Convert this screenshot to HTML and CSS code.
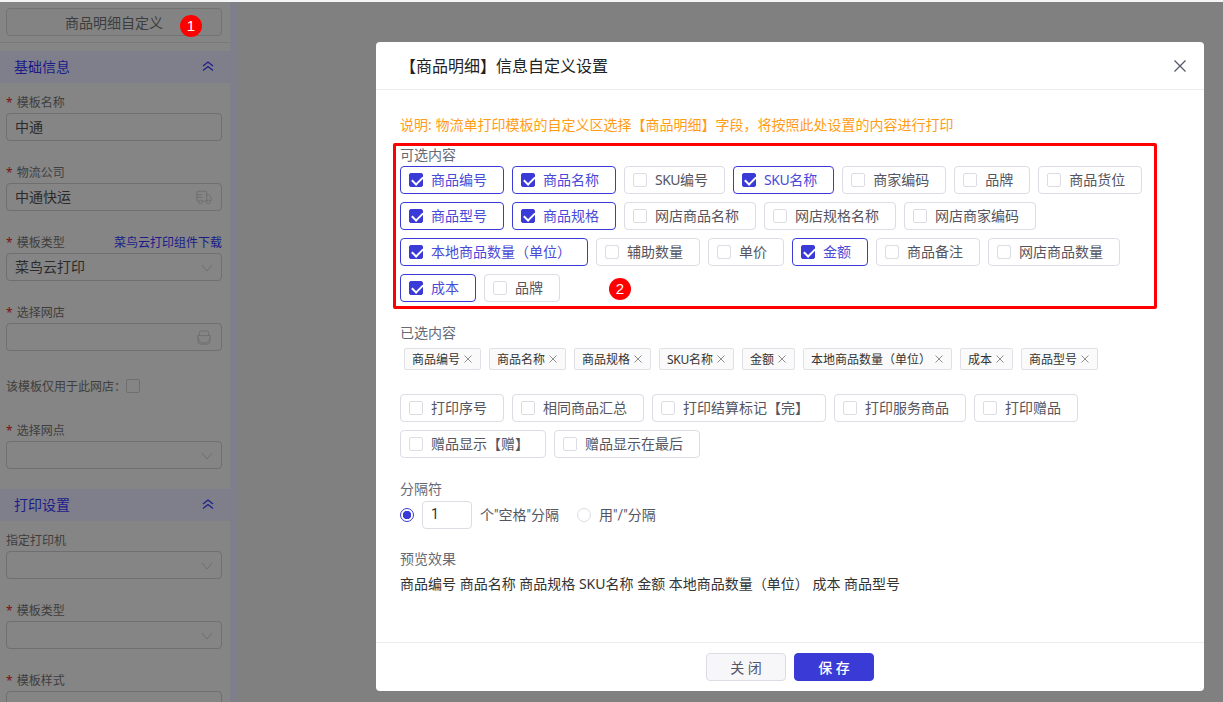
FILE: index.html
```html
<!DOCTYPE html>
<html lang="en">
<head>
  <meta charset="UTF-8">
  <title>商品明细自定义</title>
  <link rel="stylesheet" href="styles.css">
</head>
<body>
  <aside class="sidebar">
    <div class="top-action">
      <button class="btn-custom">商品明细自定义</button>
    </div>

    <div class="section-head">
      <span>基础信息</span>
      <svg class="double-up" viewBox="0 0 12 10"><path d="M1 5 6 1l5 4M1 9.500 6 5.500l5 4"/></svg>
    </div>
    <div class="field">
      <label><i>*</i>模板名称</label>
      <div class="input">中通</div>
    </div>
    <div class="field">
      <label><i>*</i>物流公司</label>
      <div class="input">中通快运
        <svg class="input-icon" viewBox="0 0 18 16"><path d="M12 12H7M3 12H2a1 1 0 0 1-1-1V2a1 1 0 0 1 1-1h9a1 1 0 0 1 1 1v10M12 5h3l2 3v4h-1M1 8h6M1 5h6"/><circle cx="5" cy="13" r="2"/><circle cx="14" cy="13" r="2"/></svg>
      </div>
    </div>
    <div class="field">
      <label class="label-row"><span><i>*</i>模板类型</span><a>菜鸟云打印组件下载</a></label>
      <div class="input">菜鸟云打印
        <svg class="chevron" viewBox="0 0 12 8"><path d="M1 1l5 6 5-6"/></svg>
      </div>
    </div>
    <div class="field">
      <label><i>*</i>选择网店</label>
      <div class="input">
        <svg class="input-icon" viewBox="0 0 16 16"><path d="M3 6V3a2 2 0 0 1 2-2h6a2 2 0 0 1 2 2v3M1 6h14M2 8v5a2 2 0 0 0 2 2h8a2 2 0 0 0 2-2V8M1 6v1a2 2 0 0 0 14 0V6"/></svg>
      </div>
    </div>
    <div class="only-shop">该模板仅用于此网店：<span class="box"></span></div>
    <div class="field">
      <label><i>*</i>选择网点</label>
      <div class="input"><svg class="chevron" viewBox="0 0 12 8"><path d="M1 1l5 6 5-6"/></svg></div>
    </div>

    <div class="section-head second">
      <span>打印设置</span>
      <svg class="double-up" viewBox="0 0 12 10"><path d="M1 5 6 1l5 4M1 9.500 6 5.500l5 4"/></svg>
    </div>
    <div class="field">
      <label>指定打印机</label>
      <div class="input"><svg class="chevron" viewBox="0 0 12 8"><path d="M1 1l5 6 5-6"/></svg></div>
    </div>
    <div class="field">
      <label><i>*</i>模板类型</label>
      <div class="input"><svg class="chevron" viewBox="0 0 12 8"><path d="M1 1l5 6 5-6"/></svg></div>
    </div>
    <div class="field">
      <label><i>*</i>模板样式</label>
      <div class="input"><svg class="chevron" viewBox="0 0 12 8"><path d="M1 1l5 6 5-6"/></svg></div>
    </div>
  </aside>

  <div class="badge badge-one">1</div>

  <div class="modal">
    <div class="modal-head">
      <h2>【商品明细】信息自定义设置</h2>
      <svg class="close" viewBox="0 0 12 12"><path d="M.5.500l11 11M11.500.500l-11 11"/></svg>
    </div>

    <div class="modal-body">
      <p class="notice">说明: 物流单打印模板的自定义区选择【商品明细】字段，将按照此处设置的内容进行打印</p>

      <div class="red-box">
        <div class="group-label">可选内容</div>
        <div class="chip-rows">
          <div class="chip-row">
            <div class="chip on"><span class="box"></span>商品编号</div>
            <div class="chip on"><span class="box"></span>商品名称</div>
            <div class="chip"><span class="box"></span><span><span class="sku">SKU</span>编号</span></div>
            <div class="chip on"><span class="box"></span><span><span class="sku">SKU</span>名称</span></div>
            <div class="chip"><span class="box"></span>商家编码</div>
            <div class="chip"><span class="box"></span>品牌</div>
            <div class="chip"><span class="box"></span>商品货位</div>
          </div>
          <div class="chip-row">
            <div class="chip on"><span class="box"></span>商品型号</div>
            <div class="chip on"><span class="box"></span>商品规格</div>
            <div class="chip"><span class="box"></span>网店商品名称</div>
            <div class="chip"><span class="box"></span>网店规格名称</div>
            <div class="chip"><span class="box"></span>网店商家编码</div>
          </div>
          <div class="chip-row">
            <div class="chip on"><span class="box"></span>本地商品数量（单位）</div>
            <div class="chip"><span class="box"></span>辅助数量</div>
            <div class="chip"><span class="box"></span>单价</div>
            <div class="chip on"><span class="box"></span>金额</div>
            <div class="chip"><span class="box"></span>商品备注</div>
            <div class="chip"><span class="box"></span>网店商品数量</div>
          </div>
          <div class="chip-row">
            <div class="chip on"><span class="box"></span>成本</div>
            <div class="chip"><span class="box"></span>品牌</div>
          </div>
        </div>
        <div class="badge badge-two">2</div>
      </div>

      <div class="group-label selected-label">已选内容</div>
      <div class="tags">
        <span class="tag">商品编号<svg viewBox="0 0 8 8"><path d="M.5.500l7 7M7.500.500l-7 7"/></svg></span>
        <span class="tag">商品名称<svg viewBox="0 0 8 8"><path d="M.5.500l7 7M7.500.500l-7 7"/></svg></span>
        <span class="tag">商品规格<svg viewBox="0 0 8 8"><path d="M.5.500l7 7M7.500.500l-7 7"/></svg></span>
        <span class="tag"><span><span class="sku">SKU</span>名称</span><svg viewBox="0 0 8 8"><path d="M.5.500l7 7M7.500.500l-7 7"/></svg></span>
        <span class="tag">金额<svg viewBox="0 0 8 8"><path d="M.5.500l7 7M7.500.500l-7 7"/></svg></span>
        <span class="tag">本地商品数量（单位）<svg viewBox="0 0 8 8"><path d="M.5.500l7 7M7.500.500l-7 7"/></svg></span>
        <span class="tag">成本<svg viewBox="0 0 8 8"><path d="M.5.500l7 7M7.500.500l-7 7"/></svg></span>
        <span class="tag">商品型号<svg viewBox="0 0 8 8"><path d="M.5.500l7 7M7.500.500l-7 7"/></svg></span>
      </div>

      <div class="chip-rows options">
        <div class="chip-row">
          <div class="chip"><span class="box"></span>打印序号</div>
          <div class="chip"><span class="box"></span>相同商品汇总</div>
          <div class="chip"><span class="box"></span>打印结算标记【完】</div>
          <div class="chip"><span class="box"></span>打印服务商品</div>
          <div class="chip"><span class="box"></span>打印赠品</div>
        </div>
        <div class="chip-row">
          <div class="chip"><span class="box"></span>赠品显示【赠】</div>
          <div class="chip"><span class="box"></span>赠品显示在最后</div>
        </div>
      </div>

      <div class="group-label sep-label">分隔符</div>
      <div class="sep-row">
        <span class="radio on"></span>
        <span class="num-input">1</span>
        <span class="sep-text">个"空格"分隔</span>
        <span class="radio second"></span>
        <span class="sep-text">用"/"分隔</span>
      </div>

      <div class="group-label preview-label">预览效果</div>
      <p class="preview">商品编号 商品名称 商品规格 SKU名称 金额 本地商品数量（单位） 成本 商品型号</p>
    </div>

    <div class="modal-foot">
      <button class="btn">关 闭</button>
      <button class="btn primary">保 存</button>
    </div>
  </div>
</body>
</html>
```

FILE: styles.css
```css
* {
  margin: 0;
  padding: 0;
  box-sizing: border-box;
}

html, body {
  height: 702px;
  overflow: hidden;
}

body {
  font-family: "Noto Sans", "Noto Sans CJK SC", sans-serif;
  font-size: 14px;
  color: #333;
  background: #808080;
  padding-top: 2px;
  position: relative;
}

/* Light strip left above the mask */
body::before {
  content: '';
  position: absolute;
  top: 0;
  left: 0;
  right: 0;
  height: 2px;
  background: #f5f5f7;
}

/* Left column, dimmed by the modal mask */
.sidebar {
  width: 238px;
  height: 700px;
  background: #858585;
  border-right: 8px solid #7e7f8b;
  overflow: hidden;
  color: #3e3e3e;
}

.top-action {
  height: 41px;
  padding: 6px 8px 0 6px;
  border-bottom: 1px solid #797979;
}

.btn-custom {
  display: block;
  width: 216px;
  height: 28px;
  font: inherit;
  font-size: 14px;
  color: #3d3d3d;
  background: #838383;
  border: 1px solid #737373;
  border-radius: 4px;
}

.section-head {
  display: flex;
  align-items: center;
  justify-content: space-between;
  height: 32px;
  margin-top: 8px;
  padding: 0 16px 2px 14px;
  background: #7e7f8b;
  color: #1b1b8a;
}

.double-up {
  width: 12px;
  height: 10px;
  fill: none;
  stroke: #1d1d8a;
  stroke-width: 1.2;
}

.field {
  height: 70px;
  padding: 9px 8px 0 6px;
}

.field label {
  display: block;
  height: 21px;
  line-height: 21px;
  font-size: 12px;
}

.field label.label-row {
  display: flex;
  justify-content: space-between;
}

.field label i {
  color: #7a0f0f;
  font-style: normal;
  margin-right: 4px;
}

.field label a {
  color: #1b1b8a;
  white-space: nowrap;
}

.input {
  position: relative;
  height: 28px;
  line-height: 26px;
  padding-left: 8px;
  background: #858585;
  border: 1px solid #6f6f6f;
  border-radius: 4px;
  color: #2b2b2b;
}

.input-icon, .chevron {
  position: absolute;
  right: 9px;
  fill: none;
  stroke: #6e6e6e;
  stroke-width: 1;
}

.input-icon {
  top: 6px;
  width: 16px;
  height: 15px;
}

.chevron {
  top: 10px;
  right: 8px;
  width: 12px;
  height: 8px;
}

.only-shop {
  display: flex;
  align-items: center;
  height: 20px;
  margin: 13px 0 15px 6px;
  font-size: 12px;
}

.only-shop .box {
  width: 14px;
  height: 14px;
  border: 1px solid #6f6f6f;
  border-radius: 2px;
}

/* Numbered callouts laid over the screenshot */
.badge {
  position: absolute;
  width: 22px;
  height: 22px;
  line-height: 22px;
  text-align: center;
  font-family: "Liberation Sans", sans-serif;
  font-size: 15px;
  color: #fff;
  background: #f00;
  border-radius: 50%;
}

.badge-one {
  left: 180px;
  top: 15px;
}

.badge-two {
  left: 213px;
  top: 132px;
}

/* Modal */
.modal {
  position: absolute;
  left: 376px;
  top: 42px;
  width: 828px;
  height: 649px;
  display: flex;
  flex-direction: column;
  background: #fff;
  border-radius: 4px;
}

.modal-head {
  display: flex;
  align-items: center;
  justify-content: space-between;
  height: 48px;
  padding: 0 18px 0 24px;
  border-bottom: 1px solid #ececf0;
}

.modal-head h2 {
  font-size: 16px;
  font-weight: 400;
  color: #222;
  margin-top: -2px;
}

.close {
  width: 12px;
  height: 12px;
  fill: none;
  stroke: #55556a;
  stroke-width: 1.2;
}

.modal-body {
  flex: 1;
  padding: 24px 24px 0;
}

.notice {
  height: 20px;
  line-height: 22px;
  color: #ff9d14;
}

.red-box {
  position: relative;
  width: 764px;
  height: 166px;
  margin: 9px 0 0 -7px;
  padding: 0 4px;
  border: 3px solid #f00;
  border-radius: 2px;
}

.group-label {
  height: 20px;
  line-height: 18px;
  color: #666a75;
}

.chip-rows {
  display: flex;
  flex-direction: column;
  gap: 8px;
}

.chip-row {
  display: flex;
  gap: 8px;
}

.chip {
  display: flex;
  align-items: center;
  gap: 8px;
  height: 28px;
  padding: 0 16px 2px 8px;
  background: #fff;
  border: 1px solid #dcdce4;
  border-radius: 4px;
  color: #55555f;
  white-space: nowrap;
}

.chip .box {
  position: relative;
  flex: none;
  width: 14px;
  height: 14px;
  margin-top: 2px;
  border: 1px solid #dcdce4;
  border-radius: 2px;
}

.chip.on {
  border-color: #3a3ad6;
  color: #4a4ad8;
}

.chip.on .box {
  background: #3a3ad6;
  border-color: #3a3ad6;
}

.chip.on .box::after {
  content: '';
  position: absolute;
  left: 3.500px;
  top: 0;
  width: 5px;
  height: 9px;
  border: solid #fff;
  border-width: 0 2.500px 2.500px 0;
  transform: rotate(45deg);
}

/* The capitals run a little tighter than this font sets them */
.sku {
  letter-spacing: -.5px;
}

.tag .sku {
  letter-spacing: -.3px;
}

.selected-label {
  margin-top: 14px;
  line-height: 20px;
}

.tags {
  display: flex;
  gap: 8px;
  margin: 5px 0 0 4px;
}

.tag {
  display: flex;
  align-items: center;
  height: 22px;
  padding: 0 8px 0 7px;
  font-size: 12px;
  color: #333;
  background: #fafafa;
  border: 1px solid #e0e0e6;
  border-radius: 2px;
  white-space: nowrap;
}

.tag svg {
  width: 8px;
  height: 8px;
  margin-left: 4px;
  fill: none;
  stroke: #8f8f8f;
  stroke-width: 1;
}

.options {
  margin-top: 24px;
}

.sep-label {
  margin-top: 22px;
}

.sep-row {
  display: flex;
  align-items: center;
  gap: 8px;
  height: 28px;
  margin-top: 1px;
  font-family: Roboto, "Noto Sans CJK SC", sans-serif;
  color: #55555f;
}

.sep-text {
  margin-bottom: 2px;
}

.radio {
  width: 14px;
  height: 14px;
  border: 1px solid #dcdce4;
  border-radius: 50%;
}

.radio.on {
  border-color: #3a3ad6;
  background: radial-gradient(circle, #3a3ad6 0 4px, #fff 4.500px);
}

.radio.second {
  margin-left: 10px;
}

.num-input {
  width: 50px;
  height: 28px;
  line-height: 25px;
  padding-left: 8px;
  border: 1px solid #dcdce4;
  border-radius: 4px;
  color: #333;
}

.preview-label {
  margin-top: 21px;
}

.preview {
  margin-top: 4px;
  height: 20px;
  line-height: 20px;
  color: #333;
}

.modal-foot {
  display: flex;
  justify-content: center;
  gap: 8px;
  height: 49px;
  padding-top: 10px;
  border-top: 1px solid #ececf0;
}

.btn {
  width: 80px;
  height: 28px;
  font: inherit;
  font-size: 14px;
  color: #555566;
  background: #f7f7fa;
  border: 1px solid #dcdce4;
  border-radius: 4px;
}

.btn.primary {
  color: #fff;
  background: #3a3ad6;
  border-color: #3a3ad6;
  font-weight: 500;
}
```
